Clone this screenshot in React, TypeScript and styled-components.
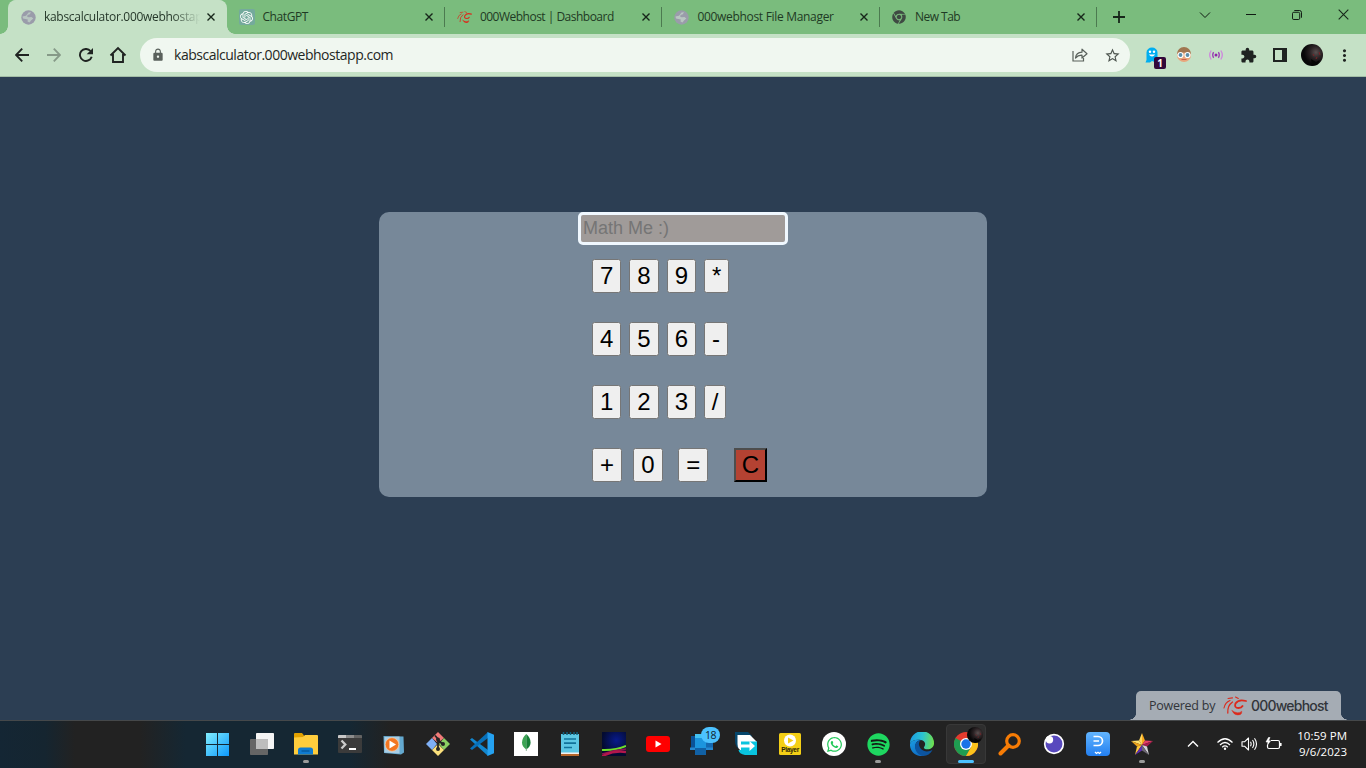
import React from "react";
import styled, { createGlobalStyle } from "styled-components";
import { SiOpenai } from "react-icons/si";
import { FaSpotify, FaWhatsapp, FaChrome } from "react-icons/fa";
import { MdLock, MdStarBorder, MdExtension, MdMoreVert } from "react-icons/md";

const GlobalStyle = createGlobalStyle`
  * { box-sizing: border-box; }
  body { margin: 0; overflow: hidden; font-family: "Open Sans", "Noto Sans", sans-serif; }
  svg { display: block; flex: none; }
`;

const Screen = styled.div`
  width: 1366px;
  height: 768px;
  display: flex;
  flex-direction: column;
  background: #2c3e53;
`;

/* ---------- browser tabs ---------- */

const TabStrip = styled.div`
  height: 34px;
  flex: none;
  display: flex;
  padding-left: 9px;
  background: #7abc7d;
`;

const Tab = styled.div<{ $active?: boolean }>`
  position: relative;
  width: ${(p) => (p.$active ? 218.4 : 217.5)}px;
  height: 34px;
  flex: none;
  display: flex;
  align-items: center;
  padding: 0 10px 0 ${(p) => (p.$active ? 11 : 11.5)}px;
  color: ${(p) => (p.$active ? "#26382a" : "#1f3a24")};
  background: ${(p) => (p.$active ? "#c5e1c6" : "transparent")};
  border-radius: 8px 8px 0 0;
  box-shadow: ${(p) => (p.$active ? "-1px 0 0 #c5e1c6" : "none")};
`;

const TabFlare = styled.i<{ $side: "left" | "right" }>`
  position: absolute;
  bottom: 0;
  ${(p) => (p.$side === "left" ? "left: -9px" : "right: -8px")};
  width: 8px;
  height: 8px;
  background: radial-gradient(
    circle at ${(p) => (p.$side === "left" ? "0 0" : "100% 0")},
    transparent 7.5px,
    #c5e1c6 8px
  );
`;

const Favicon = styled.div<{ $gap?: number }>`
  width: 16px;
  height: 16px;
  flex: none;
  margin-right: ${(p) => p.$gap ?? 7}px;
  display: flex;
  align-items: center;
  justify-content: center;
`;

const TabTitle = styled.span<{ $spacing: number; $fade?: boolean }>`
  flex: 1;
  min-width: 0;
  overflow: hidden;
  white-space: nowrap;
  font-size: 12px;
  line-height: 18px;
  letter-spacing: ${(p) => p.$spacing}px;
  ${(p) => p.$fade && "mask-image: linear-gradient(90deg, #000 128px, transparent 156px);"}
`;

const CloseSlot = styled.div`
  width: 12px;
  margin-left: 3px;
  display: flex;
  justify-content: center;
`;

const TabDivider = styled.i`
  position: absolute;
  right: 0;
  top: 7px;
  width: 1px;
  height: 20px;
  background: #4c7a50;
`;

const NewTab = styled.div`
  width: 43px;
  display: flex;
  align-items: center;
  justify-content: center;
`;

const WindowControls = styled.div`
  margin-left: auto;
  height: 29px;
  display: flex;
`;

const WindowControl = styled.div`
  width: 46px;
  display: flex;
  align-items: center;
  justify-content: center;
`;

/* ---------- toolbar ---------- */

const Toolbar = styled.div`
  height: 43px;
  flex: none;
  display: flex;
  align-items: center;
  padding: 0 6px;
  background: #c5e1c6;
  border-bottom: 1px solid #a3bda6;
`;

const ToolButton = styled.div<{ $dim?: boolean }>`
  position: relative;
  width: 32px;
  height: 32px;
  display: flex;
  align-items: center;
  justify-content: center;
  color: ${(p) => (p.$dim ? "#869a88" : "#1f2321")};
`;

const AddressBar = styled.div`
  width: 990px;
  height: 34px;
  margin: 0 6px;
  border-radius: 17px;
  padding: 0 2px 0 11px;
  display: flex;
  align-items: center;
  background: #f0f7f0;
  color: #5a615c;
`;

const Url = styled.span`
  flex: 1;
  margin-left: 9px;
  font-size: 14px;
  line-height: 20px;
  letter-spacing: -0.48px;
  color: #1f2724;
`;

const ExtensionCount = styled.span`
  position: absolute;
  left: 18px;
  top: 18px;
  width: 12px;
  height: 12px;
  border-radius: 2px;
  background: #32083a;
  color: #fff;
  font-size: 10px;
  font-weight: 700;
  line-height: 12px;
  text-align: center;
`;

/* ---------- calculator page ---------- */

const Page = styled.main`
  flex: 1;
  display: flex;
  flex-direction: column;
  align-items: center;
  padding-top: 135px;
`;

const Calculator = styled.section`
  width: 608px;
  height: 285px;
  border-radius: 10px;
  background: #778899;
  display: flex;
  flex-direction: column;
  align-items: center;
`;

const Display = styled.input`
  display: block;
  width: 210px;
  height: 33px;
  padding: 0 2px;
  margin: 0 0 14px;
  border: 3px solid #f0f8ff;
  border-radius: 5px;
  outline: none;
  background: #a09b99;
  font: 18px "Liberation Sans", Arial, sans-serif;
  &::placeholder {
    color: #757575;
    opacity: 1;
  }
`;

const Keys = styled.div`
  width: 182px;
  display: flex;
  flex-direction: column;
  gap: 29px;
`;

const KeyRow = styled.div`
  display: flex;
  gap: 8px;
`;

const Key = styled.button<{ $shift?: number; $narrow?: boolean }>`
  height: 34px;
  padding: 0 ${(p) => (p.$narrow ? 6.6 : 7)}px;
  margin: 0 0 0 ${(p) => p.$shift ?? 0}px;
  border: 1px solid #767676;
  border-radius: 2.5px;
  background: #efefef;
  color: #000;
  font: 24px "Liberation Sans", Arial, sans-serif;
  line-height: 32px;
`;

const ClearKey = styled(Key)`
  padding: 0 6px;
  border: 2px solid;
  border-color: #4d4d4d #000 #000 #4d4d4d;
  border-radius: 0;
  background: #b44232;
  line-height: 30px;
`;

const PageFooter = styled.footer`
  width: 100%;
  margin-top: auto;
  padding-right: 25px;
  display: flex;
  justify-content: flex-end;
`;

const HostBadge = styled.div`
  position: relative;
  width: 205px;
  height: 29px;
  padding-left: 13px;
  border-radius: 5px 5px 0 0;
  background: #a5acb4;
  display: flex;
  align-items: center;
  color: #32353a;
`;

const BadgeFlare = styled.i<{ $side: "left" | "right" }>`
  position: absolute;
  bottom: 0;
  ${(p) => p.$side}: -8px;
  width: 8px;
  height: 6px;
  background: radial-gradient(
    ellipse 8px 6px at ${(p) => (p.$side === "left" ? "0 0" : "100% 0")},
    transparent 94%,
    #a5acb4 100%
  );
`;

const PoweredBy = styled.span`
  width: 74px;
  font-size: 12.5px;
  white-space: nowrap;
  letter-spacing: -0.25px;
`;

const HostName = styled.span`
  margin-left: 4px;
  font: 500 14px Inter, sans-serif;
  letter-spacing: -0.78px;
`;

/* ---------- taskbar ---------- */

const Taskbar = styled.div`
  height: 48px;
  flex: none;
  display: flex;
  align-items: flex-start;
  border-top: 1px solid #45484a;
  background: linear-gradient(
    90deg,
    #142634 0,
    #152530 45px,
    #222222 75px,
    #222222 140px,
    #152733 185px,
    #152733 350px,
    #222222 390px
  );
`;

const Apps = styled.div`
  margin-left: 196px;
  display: flex;
`;

const AppSlot = styled.div<{ $open?: boolean; $active?: boolean }>`
  position: relative;
  width: 44px;
  height: 46px;
  display: flex;
  align-items: center;
  justify-content: center;
  &::before {
    content: "";
    display: ${(p) => (p.$active ? "block" : "none")};
    position: absolute;
    inset: 3px 2px;
    border: 1px solid #383838;
    border-radius: 4px;
    background: #2e2e2e;
  }
  &::after {
    content: "";
    display: ${(p) => (p.$open || p.$active ? "block" : "none")};
    position: absolute;
    bottom: 4px;
    width: ${(p) => (p.$active ? 16 : 6)}px;
    height: 3px;
    border-radius: 2px;
    background: ${(p) => (p.$active ? "#4cc2ff" : "#9b9b9b")};
  }
  svg {
    position: relative;
  }
`;

const CountBadge = styled.span`
  position: absolute;
  left: 21px;
  top: 6px;
  width: 19px;
  height: 16px;
  border-radius: 8px;
  background: #4cc2ff;
  color: #10222e;
  font-size: 10.5px;
  line-height: 16px;
  letter-spacing: -0.4px;
  text-align: center;
`;

const AvatarOverlay = styled.div`
  position: absolute;
  left: 23px;
  top: 6px;
  svg {
    position: static;
  }
`;

const Tray = styled.div`
  height: 46px;
  margin-left: auto;
  padding-right: 19px;
  display: flex;
  align-items: center;
`;

const TrayIcon = styled.div<{ $w: number }>`
  width: ${(p) => p.$w}px;
  display: flex;
  justify-content: center;
`;

const Clock = styled.div`
  width: 58px;
  color: #fff;
  font-size: 11.5px;
  line-height: 16px;
  letter-spacing: 0.02px;
  text-align: right;
  white-space: nowrap;
`;

/* ---------- drawings ---------- */

const Cross = ({ size = 8, weight = 1.4 }: { size?: number; weight?: number }) => (
  <svg width={size} height={size} viewBox="0 0 8 8" stroke="#17261a" strokeWidth={weight}>
    <path d="M.5 .5 7.5 7.5M7.5 .5 .5 7.5" />
  </svg>
);

const Arrow = ({ flip }: { flip?: boolean }) => (
  <svg width="14" height="14" viewBox="0 0 14 14" fill="none" stroke="currentColor" strokeWidth="1.9">
    <path d={flip ? "M0 7h12.500M6.800 .7 13 7l-6.200 6.300" : "M14 7H1.500M7.200 .7 1 7l6.200 6.300"} />
  </svg>
);

const Reload = () => (
  <svg width="14" height="14" viewBox="0 0 14 14" fill="none" stroke="currentColor" strokeWidth="1.9">
    <path d="M12.700 8.700A6 6 0 1 1 11.500 3" />
    <path d="M14 0v6.300H7.700z" fill="currentColor" stroke="none" />
  </svg>
);

const Globe = () => (
  <svg width="15" height="15" viewBox="0 0 15 15">
    <circle cx="7.5" cy="7.5" r="7.2" fill="#9a9caa" />
    <path d="M7.500 2.500 10 2.200 8.800 4.200 6.500 5 6.300 7 8 7.300 10.500 7 12.300 8.500 10 10.500 8.500 12.600 6.500 11.500 6.800 9.500 2 8.500 1.500 6.500 5 5.800z" fill="#c5d9cb" opacity=".7" />
  </svg>
);

const WebhostMark = ({ size, color = "#dc2a1c" }: { size: number; color?: string }) => (
  <svg width={size} height={(size * 20) / 24} viewBox="0 0 24 20" fill="none" stroke={color} strokeLinecap="round">
    <path d="M23 5Q15.500 2.800 12.500 7.500q-1.500 4.500 3 4.500 3 0 4-2" strokeWidth="1.800" />
    <path d="M9 14.500q2.500 6 8.500 4 1.500-.8 1.300-3.300-1.800 1.600-4.300 1.500Q11.500 16.500 9 14.500z" fill={color} strokeWidth=".4" />
    <path d="M9.500 6Q4.300 9.500 4.800 17" strokeWidth="1.300" />
    <path d="M7 4.500Q2 6.500 1 12" strokeWidth="1.100" />
    <path d="M12.500 1l2.800 1.400M5 2.500 9.500 1.900" strokeWidth="1.100" />
  </svg>
);

const Avatar = ({ size, id }: { size: number; id: string }) => (
  <svg width={size} height={size} viewBox="0 0 22 22">
    <defs>
      <radialGradient id={id} cx=".68" cy=".38" r=".55">
        <stop offset="0" stopColor="#5a5050" />
        <stop offset=".5" stopColor="#2a2224" />
        <stop offset="1" stopColor="#070708" />
      </radialGradient>
    </defs>
    <circle cx="11" cy="11" r="11" fill={`url(#${id})`} />
    <path d="M12 10l1 2M16 13l-1 2M18 8l1 3" stroke="#7a2226" strokeWidth="1" />
    <path d="M10 15l5 3 4-2-3 5-5 .5z" fill="#050505" />
  </svg>
);

const Ghost = () => (
  <svg width="14" height="16" viewBox="0 0 14 16">
    <path d="M1.500 13V5.500a5.500 5 0 0 1 11 0V13l1.500 2H9.500L7 14l-2 1.500H.5z" fill="#00aef0" />
    <circle cx="5" cy="4.800" r="1.200" fill="#fff" />
    <circle cx="9" cy="4.800" r="1.200" fill="#fff" />
    <path d="M3.800 7.500q3.200 4 6.400 0z" fill="#fff" />
  </svg>
);

const Face = () => (
  <svg width="16" height="16" viewBox="0 0 16 16">
    <circle cx="8" cy="8" r="7" fill="#e9a67c" />
    <path d="M1 7A7 7 0 0 1 15 7L8 5.500z" fill="#a07650" />
    <circle cx="4.500" cy="8" r="2.500" fill="#5d8ea8" stroke="#fff" strokeWidth="1.200" />
    <circle cx="11.500" cy="8" r="2.500" fill="#5d8ea8" stroke="#fff" strokeWidth="1.200" />
    <path d="M5.500 12.500h5" stroke="#c9604e" />
  </svg>
);

const Broadcast = () => (
  <svg width="14" height="12" viewBox="0 0 14 12" fill="none" strokeWidth="1.300">
    <circle cx="7" cy="6" r="1.500" fill="#8e24aa" />
    <path d="M4.600 3.200q-1.800 2.800 0 5.600M9.400 3.200q1.800 2.800 0 5.600" stroke="#9c3bb5" />
    <path d="M2.200 1.500q-3 4.500 0 9M11.800 1.500q3 4.500 0 9" stroke="#cf86de" />
  </svg>
);

const WindowsLogo = () => (
  <svg width="24" height="24" viewBox="0 0 24 24">
    <defs>
      <linearGradient id="win" gradientUnits="userSpaceOnUse" x1="0" y1="0" x2="24" y2="24">
        <stop stopColor="#84f0ff" />
        <stop offset="1" stopColor="#0a96fb" />
      </linearGradient>
    </defs>
    <path d="M0 1h11v11H0zM12 1h11v11H12zM0 13h11v11H0zM12 13h11v11H12z" fill="url(#win)" />
  </svg>
);

const TaskView = () => (
  <svg width="24" height="24" viewBox="0 0 24 24">
    <rect x="6" y="1" width="18" height="16" rx=".8" fill="#f5f5f5" />
    <rect x="0" y="7" width="18" height="16" rx=".8" fill="#656565" />
    <path d="M6 7h12v10H6z" fill="#bdbdbd" />
  </svg>
);

const Folder = () => (
  <svg width="24" height="24" viewBox="0 0 24 24">
    <path d="M0 1.500Q0 1 1 1h7l2 2.500V7H0z" fill="#e2a100" />
    <path d="M0 5.500 9 5l2-2h12q1 0 1 1v18.500H0z" fill="#ffcd3d" />
    <path d="M4 22.500v-4.500Q4 15.500 6.500 15.500h10q2.500 0 2.500 2.500v4.500z" fill="#0f7bd0" />
    <path d="M7.500 19h8" stroke="#075a9d" strokeWidth="1.400" />
  </svg>
);

const TerminalIcon = () => (
  <svg width="24" height="24" viewBox="0 0 24 24">
    <rect y="3" width="24" height="18" rx="1" fill="#3b3b3b" />
    <path d="M0 6V4q0-1 1-1h7v3z" fill="#c8c8c8" />
    <path d="M8 3h8v3H8z" fill="#8c8c8c" />
    <path d="M16 3h7q1 0 1 1v2h-8z" fill="#636363" />
    <path d="m3.500 8.500 3.800 4-3.800 4" fill="none" stroke="#ccc" strokeWidth="2.300" />
    <path d="M11 17h7" stroke="#fff" strokeWidth="2" />
  </svg>
);

const MediaPlayer = () => (
  <svg width="24" height="24" viewBox="0 0 24 24">
    <path d="m1.500 4 20 .5.500 16-3 2-17-1.500z" fill="#64a9cf" />
    <path d="m2.500 5 15-.5v17l-15-1z" fill="#aacde4" />
    <circle cx="10" cy="12.500" r="6.800" fill="#f37622" stroke="#f9d1a9" strokeWidth=".7" />
    <path d="m7.500 8.500 6.500 4-6.500 4z" fill="#fff" />
  </svg>
);

const GitIcon = () => (
  <svg width="24" height="24" viewBox="0 0 24 24">
    <path d="m12 0 6 6-6 5-6-5z" fill="#f07a78" />
    <path d="m24 12-6 6-5-6 5-6z" fill="#8bcf63" />
    <path d="m0 12 6-6 5 6-5 6z" fill="#7fb0f5" />
    <path d="m12 24-6-6 6-6 6 6z" fill="#fbe07c" />
    <path d="M9 3.500 12 7v11M12 8l4.500 4" stroke="#242424" strokeWidth="1.800" fill="none" />
    <circle cx="12" cy="7.500" r="2" fill="#242424" />
    <circle cx="12" cy="17" r="2" fill="#242424" />
    <circle cx="17" cy="12" r="2" fill="#242424" />
  </svg>
);

const CodeIcon = () => (
  <svg width="24" height="24" viewBox="0 0 24 24">
    <path d="M0 7.500 2 6l16 12v6z" fill="#1287cf" />
    <path d="M0 16.500 2 18 18 6V0z" fill="#0870b8" />
    <path d="m17.500 0 6.500 2.800v18.400L17.500 24z" fill="#25a2f1" />
  </svg>
);

const MongoIcon = () => (
  <svg width="24" height="24" viewBox="0 0 24 24">
    <path d="M0 0h24v24H0z" fill="#fff" />
    <path d="M12.300 2q-4.500 4-4.300 8.800.2 4 4.300 6.800z" fill="#3ea455" />
    <path d="M12.300 2q4.500 4 4.300 8.800-.2 4-4.300 6.800z" fill="#167e36" />
    <path d="M12.300 16v3" stroke="#73a27c" strokeWidth=".8" />
  </svg>
);

const NotepadIcon = () => (
  <svg width="24" height="24" viewBox="0 0 24 24">
    <path d="M3 22h18v2H3z" fill="#b7682d" />
    <path d="M3 20h18v2H3z" fill="#f2f2f2" />
    <path d="M3 2h18v18.500H3z" fill="#5ec8e4" />
    <path d="M5.500 0v3M9 0v3M12.500 0v3M16 0v3M19 0v3" stroke="#10627f" strokeWidth="1.500" />
    <path d="M6 7h12M6 11.200h12M6 15.500h8" stroke="#12739a" strokeWidth="1.700" />
  </svg>
);

const LaserIcon = () => (
  <svg width="24" height="24" viewBox="0 0 24 24">
    <defs>
      <radialGradient id="laser" cx=".6" cy=".35" r=".6">
        <stop stopColor="#081a8c" />
        <stop offset="1" stopColor="#030b30" />
      </radialGradient>
      <clipPath id="laserBox">
        <path d="M0 0h24v24H0z" />
      </clipPath>
    </defs>
    <path d="M0 0h24v24H0z" fill="url(#laser)" />
    <g fill="none" clipPath="url(#laserBox)">
      <path d="M0 18q14 .5 24-4" stroke="#6ee02a" strokeWidth="2" />
      <path d="M0 22q12-4 24-5" stroke="#8c1450" strokeWidth="1.600" />
      <path d="M0 24.500Q11 18 24 20" stroke="#b2174b" strokeWidth="2.400" />
    </g>
  </svg>
);

const YouTubeIcon = () => (
  <svg width="24" height="24" viewBox="0 0 24 24">
    <rect y="4" width="24" height="16" rx="3" fill="#f00" />
    <path d="m9.500 8.500 6 3.500-6 3.500z" fill="#fff" />
  </svg>
);

const PhoneIcon = () => (
  <svg width="24" height="24" viewBox="0 0 24 24">
    <path d="M1 4h10v13H1z" fill="#0a5298" />
    <path d="M14 5h9v12h-9z" fill="#1469b1" />
    <path d="M0 15.500h7V18H0zM16 15.500h7V18h-7z" fill="#2488d2" />
    <path d="M5 2h11v21H5z" fill="#1c95de" />
    <path d="M5 2h11v4H5z" fill="#43c2f1" />
    <path d="M5 16h11v7H5z" fill="#1161a5" />
  </svg>
);

const TransferIcon = () => (
  <svg width="24" height="24" viewBox="0 0 24 24">
    <path d="M1 0h13l4 4v14H8Q1 16 1 9z" fill="#06466b" />
    <path d="M3.500 3H16l7 7v9H9q-5.500-1-5.500-7z" fill="#fff" />
    <path d="M7 9.500h16V23H11q-6-1-6.500-5H7z" fill="#09c4df" />
    <path d="M7 12.500h8.500V9l5.500 5-5.500 5v-3.500H7z" fill="#fff" />
  </svg>
);

const PlayerLabel = styled.span`
  position: absolute;
  left: 11px;
  top: 25px;
  width: 22px;
  color: #292507;
  font: 700 6.500px/8px "Liberation Sans", Arial, sans-serif;
  letter-spacing: -0.3px;
  text-align: center;
`;

const PlayerIcon = () => (
  <>
    <svg width="24" height="24" viewBox="0 0 24 24">
      <rect x="1" y="1" width="22" height="22" rx="1.500" fill="#f4cf16" />
      <circle cx="12" cy="8.500" r="6" fill="#fff" />
      <path d="m10 5.500 5.500 3-5.500 3z" fill="#f4cf16" />
    </svg>
    <PlayerLabel>Player</PlayerLabel>
  </>
);

const WhiteDisc = styled.div`
  position: relative;
  width: 24px;
  height: 24px;
  border-radius: 50%;
  background: #fff;
  color: #25c95b;
  display: flex;
  align-items: center;
  justify-content: center;
`;

const SpotifyDisc = styled(WhiteDisc)`
  width: 21px;
  height: 21px;
  background: #141a16;
  color: #1ed760;
`;

const EdgeIcon = () => (
  <svg width="24" height="24" viewBox="0 0 24 24">
    <defs>
      <linearGradient id="edgeTop" x1="0" y1=".4" x2="1" y2=".5">
        <stop stopColor="#1b9de2" />
        <stop offset=".5" stopColor="#2bc3d2" />
        <stop offset="1" stopColor="#6fe04c" />
      </linearGradient>
      <linearGradient id="edgeLow" x1="0" y1="0" x2=".6" y2="1">
        <stop stopColor="#1b9de2" />
        <stop offset="1" stopColor="#0f6cc4" />
      </linearGradient>
    </defs>
    <path d="M0 11.500A12 12 0 0 1 24 11c.2 4-3 6.200-6.500 6.200-3 0-4-1-3.500-2 2.500-3.200.8-6.700-3-7.200C6 7 1.500 8.500 0 11.500z" fill="url(#edgeTop)" />
    <path d="M0 12C1 8.500 6 7 11 8c-4 .5-6 3.500-5.500 7 .5 4.500 4 8 8.500 8.800C6 25.500-.5 19.500 0 12z" fill="url(#edgeLow)" />
    <path d="M11 8c-3 2-2.500 6 0 9 3 3.200 8 3 11.500.8C20.500 22 17 24 13.500 24 8.500 23.500 5 19 5 15c0-4 2.500-6.500 6-7z" fill="#0c549f" />
  </svg>
);

const ChromeIcon = () => (
  <svg width="24" height="24" viewBox="0 0 24 24">
    <circle cx="12" cy="12" r="12" fill="#e33b2e" />
    <path d="M12 12 1.600 6A12 12 0 0 0 12 24l5.200-9z" fill="#1f9d51" />
    <path d="M12 6h10.400A12 12 0 0 1 12 24l5.200-9z" fill="#fcc31c" />
    <circle cx="12" cy="12" r="6" fill="#fff" />
    <circle cx="12" cy="12" r="4.700" fill="#1a73e8" />
  </svg>
);

const SearchIcon = () => (
  <svg width="24" height="24" viewBox="0 0 24 24" fill="none" stroke="#f77c05">
    <circle cx="15" cy="9" r="6.300" strokeWidth="3.200" />
    <path d="m10.500 13.500-8 8" strokeWidth="4" strokeLinecap="round" />
  </svg>
);

const EyeIcon = () => (
  <svg width="24" height="24" viewBox="0 0 24 24">
    <circle cx="12" cy="12" r="9.300" fill="#5849be" stroke="#fff" strokeWidth="1.700" />
    <circle cx="7.500" cy="7.800" r="3.700" fill="#fff" />
  </svg>
);

const AssistantIcon = () => (
  <svg width="24" height="24" viewBox="0 0 24 24" fill="none" stroke="#fff">
    <defs>
      <linearGradient id="assist" x1="0" y1="0" x2="0" y2="1">
        <stop stopColor="#62b5ff" />
        <stop offset="1" stopColor="#237ff0" />
      </linearGradient>
    </defs>
    <rect width="24" height="24" rx="4" fill="url(#assist)" stroke="none" />
    <path d="M7.500 4.500H12a4.500 4.500 0 0 1 0 9H7.500M7.500 9H13" strokeWidth="1.700" />
    <path d="m9 20 1.500 1.500L12 20.300l1.500 1.200L15 20" strokeWidth="1.300" />
  </svg>
);

const StarIcon = () => (
  <svg width="24" height="24" viewBox="0 0 24 24">
    <path d="m12 1 3 7.500L12 13z" fill="#f8a81c" />
    <path d="m12 1-3 7.500 3 4.500z" fill="#ffd75b" />
    <path d="m1 9 8-.5 3 4.500z" fill="#ffe06c" />
    <path d="m1 9 6 5.500 5-1.500z" fill="#eda21a" />
    <path d="m23 9-8-.5-3 4.500z" fill="#e44068" />
    <path d="m23 9-6 5.500-5-1.500z" fill="#a61b4d" />
    <path d="m5 23 2-8.500 5-1.500z" fill="#ffc83b" />
    <path d="m5 23 7-4.500V13z" fill="#5d2cb1" />
    <path d="m19 23-2-8.500-5-1.500z" fill="#d4d4d8" />
    <path d="m19 23-7-4.500V13z" fill="#6a6571" />
  </svg>
);

const taskbarApps: { name: string; icon: React.ReactNode; open?: boolean; active?: boolean }[] = [
  { name: "start", icon: <WindowsLogo /> },
  { name: "taskview", icon: <TaskView /> },
  { name: "explorer", icon: <Folder />, open: true },
  { name: "terminal", icon: <TerminalIcon /> },
  { name: "media", icon: <MediaPlayer /> },
  { name: "git", icon: <GitIcon /> },
  { name: "code", icon: <CodeIcon /> },
  { name: "mongo", icon: <MongoIcon /> },
  { name: "notepad", icon: <NotepadIcon /> },
  { name: "laser", icon: <LaserIcon /> },
  { name: "youtube", icon: <YouTubeIcon /> },
  { name: "phone", icon: <><PhoneIcon /><CountBadge>18</CountBadge></> },
  { name: "transfer", icon: <TransferIcon /> },
  { name: "player", icon: <PlayerIcon /> },
  { name: "whatsapp", icon: <WhiteDisc><FaWhatsapp size={17} /></WhiteDisc> },
  { name: "spotify", icon: <SpotifyDisc><FaSpotify size={23} /></SpotifyDisc>, open: true },
  { name: "edge", icon: <EdgeIcon /> },
  {
    name: "chrome",
    icon: <><ChromeIcon /><AvatarOverlay><Avatar size={16} id="avatarSmall" /></AvatarOverlay></>,
    active: true,
  },
  { name: "search", icon: <SearchIcon /> },
  { name: "eye", icon: <EyeIcon /> },
  { name: "assistant", icon: <AssistantIcon /> },
  { name: "star", icon: <StarIcon />, open: true },
];

const GptTile = styled.div`
  width: 16px;
  height: 16px;
  border-radius: 2px;
  background: #74aa9c;
  color: #fff;
  display: flex;
  align-items: center;
  justify-content: center;
`;

const tabs = [
  { title: "kabscalculator.000webhostapp.com", spacing: -0.3, icon: <Globe />, active: true },
  { title: "ChatGPT", spacing: -0.4, icon: <GptTile><SiOpenai size={13} /></GptTile> },
  { title: "000Webhost | Dashboard", spacing: -0.51, icon: <WebhostMark size={15} /> },
  { title: "000webhost File Manager", spacing: -0.31, icon: <Globe /> },
  { title: "New Tab", spacing: -0.5, icon: <FaChrome size={14} color="#3f4a43" /> },
];

export default function App() {
  return (
    <Screen>
      <GlobalStyle />
      <TabStrip>
        {tabs.map((t, i) => (
          <Tab key={t.title} $active={t.active}>
            {t.active && <><TabFlare $side="left" /><TabFlare $side="right" /></>}
            <Favicon $gap={t.active ? 8 : 7.5}>{t.icon}</Favicon>
            <TabTitle $spacing={t.spacing} $fade={t.active}>{t.title}</TabTitle>
            <CloseSlot><Cross /></CloseSlot>
            {i > 0 && <TabDivider />}
          </Tab>
        ))}
        <NewTab>
          <svg width="12" height="12" viewBox="0 0 12 12" stroke="#17261a" strokeWidth="1.800">
            <path d="M6 0v12M0 6h12" />
          </svg>
        </NewTab>
        <WindowControls>
          <WindowControl>
            <svg width="12" height="8" viewBox="0 0 12 8" fill="none" stroke="#101a12">
              <path d="m1 1.500 5 5 5-5" />
            </svg>
          </WindowControl>
          <WindowControl>
            <svg width="10" height="1" viewBox="0 0 10 1"><path d="M0 0h10v1H0z" fill="#101a12" /></svg>
          </WindowControl>
          <WindowControl>
            <svg width="10" height="10" viewBox="0 0 11 11" fill="none" stroke="#101a12" strokeWidth="1.1">
              <rect x=".5" y="2.500" width="8" height="8" rx="1.500" />
              <path d="M2.500.5H8Q10.500.5 10.500 3v5.500" />
            </svg>
          </WindowControl>
          <WindowControl><Cross size={11} weight={0.8} /></WindowControl>
        </WindowControls>
      </TabStrip>

      <Toolbar>
        <ToolButton><Arrow /></ToolButton>
        <ToolButton $dim><Arrow flip /></ToolButton>
        <ToolButton><Reload /></ToolButton>
        <ToolButton>
          <svg width="18" height="18" viewBox="0 0 18 18" fill="none" stroke="currentColor" strokeWidth="1.900">
            <path d="M1.500 9.500 9 2l7.500 7.500M4 8v8h10V8" />
          </svg>
        </ToolButton>
        <AddressBar>
          <MdLock size={14} />
          <Url>kabscalculator.000webhostapp.com</Url>
          <ToolButton>
            <svg width="16" height="14" viewBox="0 0 16 14" fill="none" stroke="#59615b" strokeWidth="1.200">
              <path d="M1 3v10h10.500v-3" />
              <path d="M3.500 10q.5-5.500 6.500-5.800V1.200l5 4.500-5 4.300V7.200Q6 7 3.500 10z" strokeLinejoin="round" />
            </svg>
          </ToolButton>
          <ToolButton><MdStarBorder size={17} color="#4e5650" /></ToolButton>
        </AddressBar>
        <ToolButton><Ghost /><ExtensionCount>1</ExtensionCount></ToolButton>
        <ToolButton><Face /></ToolButton>
        <ToolButton><Broadcast /></ToolButton>
        <ToolButton><MdExtension size={17} /></ToolButton>
        <ToolButton>
          <svg width="14" height="14" viewBox="0 0 14 14">
            <rect x="1" y="1" width="12" height="12" fill="none" stroke="#1f2321" strokeWidth="2" />
            <path d="M9 1h4v12H9z" fill="#1f2321" />
          </svg>
        </ToolButton>
        <ToolButton><Avatar size={22} id="avatarLarge" /></ToolButton>
        <ToolButton><MdMoreVert size={19} /></ToolButton>
      </Toolbar>

      <Page>
        <Calculator>
          <Display placeholder="Math Me :)" />
          <Keys>
            <KeyRow><Key>7</Key><Key>8</Key><Key>9</Key><Key>*</Key></KeyRow>
            <KeyRow><Key>4</Key><Key>5</Key><Key>6</Key><Key>-</Key></KeyRow>
            <KeyRow><Key>1</Key><Key>2</Key><Key>3</Key><Key $narrow>/</Key></KeyRow>
            <KeyRow>
              <Key>+</Key>
              <Key $shift={3.3}>0</Key>
              <Key $shift={7.5}>=</Key>
              <ClearKey $shift={17.6}>C</ClearKey>
            </KeyRow>
          </Keys>
        </Calculator>
        <PageFooter>
          <HostBadge>
            <BadgeFlare $side="left" />
            <BadgeFlare $side="right" />
            <PoweredBy>Powered by</PoweredBy>
            <WebhostMark size={24} />
            <HostName>000webhost</HostName>
          </HostBadge>
        </PageFooter>
      </Page>

      <Taskbar>
        <Apps>
          {taskbarApps.map((a) => (
            <AppSlot key={a.name} $open={a.open} $active={a.active}>{a.icon}</AppSlot>
          ))}
        </Apps>
        <Tray>
          <TrayIcon $w={32}>
            <svg width="12" height="8" viewBox="0 0 12 8" fill="none" stroke="#fff" strokeWidth="1.400">
              <path d="m1 6.500 5-5 5 5" />
            </svg>
          </TrayIcon>
          <TrayIcon $w={32}>
            <svg width="16" height="14" viewBox="0 0 16 14" fill="none" stroke="#fff" strokeWidth="1.200">
              <path d="M.5 5.500Q8-2 15.500 5.500M3 8q5-5 10 0M5.200 10.200q2.800-2.600 5.600 0" />
              <circle cx="8" cy="11.800" r="1.200" fill="#fff" stroke="none" />
            </svg>
          </TrayIcon>
          <TrayIcon $w={17}>
            <svg width="17" height="14" viewBox="0 0 17 14" fill="none" stroke="#fff" strokeWidth="1.100">
              <path d="M1 4.800h2.500L7.500 1v12L3.500 9.200H1z" strokeLinejoin="round" />
              <path d="M9.500 4.800q1.300 2.200 0 4.400M11.500 3q2.700 4 0 8M13.500 1.300q4 5.700 0 11.400" />
            </svg>
          </TrayIcon>
          <TrayIcon $w={31}>
            <svg width="17" height="14" viewBox="0 0 17 14" fill="none" stroke="#fff" strokeWidth="1.200">
              <path d="M6 3.500h7q1.500 0 1.500 1.500v5q0 1.500-1.500 1.500H4q-1.500 0-1.500-1.500V8" />
              <path d="M15.800 6v3" strokeWidth="1.600" />
              <path d="M3.500.5 1 5h2L2.500 8 5.500 3.800H3.500L5 .5z" fill="#fff" strokeWidth=".6" />
            </svg>
          </TrayIcon>
          <Clock>10:59 PM<br />9/6/2023</Clock>
        </Tray>
      </Taskbar>
    </Screen>
  );
}
